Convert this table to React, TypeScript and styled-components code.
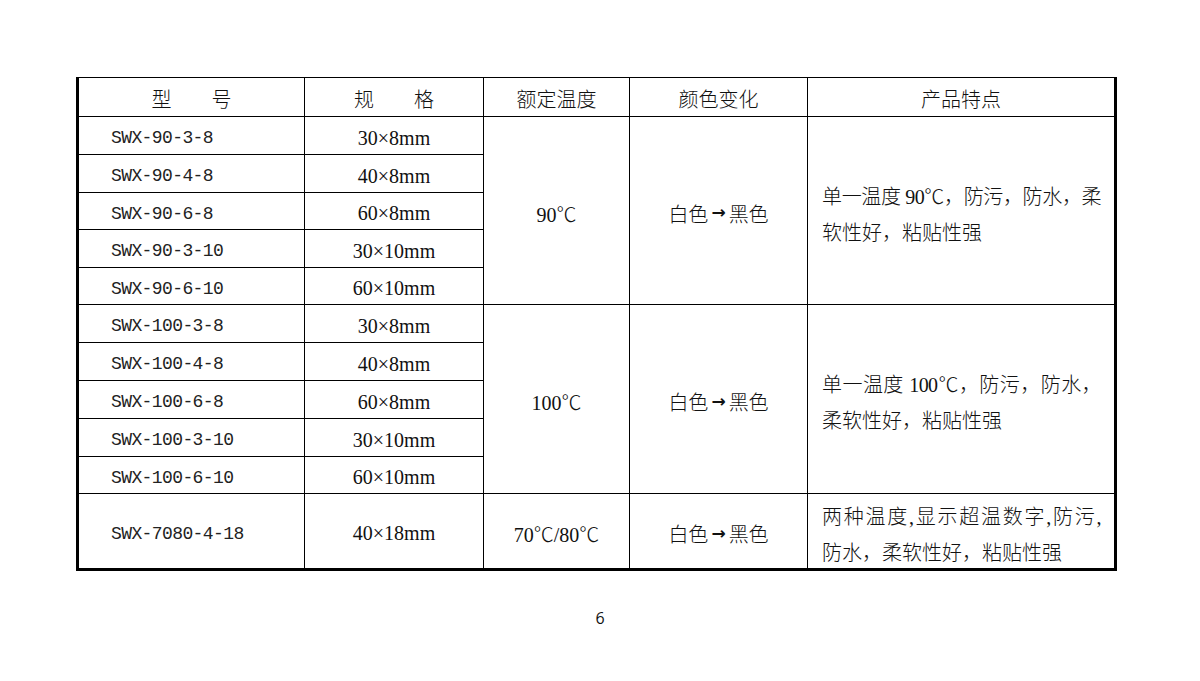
import React from "react";
import styled, { createGlobalStyle } from "styled-components";

const GlobalStyle = createGlobalStyle`
    html, body {
        margin: 0;
        padding: 0;
        background: #fff;
    }
    body {
        width: 1200px;
        height: 681px;
        overflow: hidden;
        color: #111;
        font-family: "Liberation Serif", "Noto Sans CJK SC", serif;
    }
`;

const Page = styled.div`
    display: flex;
    flex-direction: column;
    padding-top: 77px;
`;

const Sheet = styled.div`
    display: grid;
    grid-template-columns: 225px 178px 145px 177px 306px;
    grid-template-rows: 38px 37px 37px 36px 37px 36px 37px 37px 37px 37px 36px 74px;
    gap: 1px;
    background: #000;
    border: 3px solid #000;
    border-top-width: 1px;
    margin-left: 76px;
    width: max-content;
`;

const Cell = styled.div<{ $span?: number; $left?: boolean }>`
    grid-row: span ${(p) => p.$span || 1};
    background: #fff;
    display: flex;
    align-items: center;
    justify-content: ${(p) => (p.$left ? "flex-start" : "center")};
    padding: 5px 0 0 ${(p) => (p.$left ? "32px" : "0")};
    font-size: 20px;
    font-weight: 300;
    white-space: nowrap;
`;

const Head = styled(Cell)`
    padding-top: 2px;
    white-space: pre;
`;

const Code = styled.span`
    font-family: "Liberation Mono", monospace;
    font-size: 18px;
    letter-spacing: -0.6px;
    color: #222;
`;

const Arrow = styled.span`
    font-family: "DejaVu Sans", sans-serif;
    font-weight: bold;
    font-size: 17px;
    margin: 0 3px;
    position: relative;
    top: -1px;
`;

const Feature = styled.div`
    grid-row: span ${(p: { $span: number }) => p.$span};
    background: #fff;
    display: flex;
    flex-direction: column;
    justify-content: center;
    padding: 8px 13px 0 14px;
    font-size: 20px;
    font-weight: 300;
    line-height: 36px;
`;

const Line = styled.div<{ $full?: boolean }>`
    white-space: nowrap;
    text-align: left;
    text-align-last: ${(p) => (p.$full ? "justify" : "left")};
    letter-spacing: ${(p) => (p.$full ? "-0.6px" : "0")};
`;

const Footer = styled.div`
    margin-top: 36px;
    text-align: center;
    font-family: "Open Sans", "Liberation Sans", sans-serif;
    font-size: 16px;
    color: #111;
`;

type Group = {
    temp: string;
    rows: string[][];
    lines: { text: string; full?: boolean }[];
};

const groups: Group[] = [
    {
        temp: "90℃",
        rows: [
            ["SWX-90-3-8", "30×8mm"],
            ["SWX-90-4-8", "40×8mm"],
            ["SWX-90-6-8", "60×8mm"],
            ["SWX-90-3-10", "30×10mm"],
            ["SWX-90-6-10", "60×10mm"],
        ],
        lines: [{ text: "单一温度 90℃，防污，防水，柔", full: true }, { text: "软性好，粘贴性强" }],
    },
    {
        temp: "100℃",
        rows: [
            ["SWX-100-3-8", "30×8mm"],
            ["SWX-100-4-8", "40×8mm"],
            ["SWX-100-6-8", "60×8mm"],
            ["SWX-100-3-10", "30×10mm"],
            ["SWX-100-6-10", "60×10mm"],
        ],
        lines: [{ text: "单一温度 100℃，防污，防水，", full: true }, { text: "柔软性好，粘贴性强" }],
    },
    {
        temp: "70℃/80℃",
        rows: [["SWX-7080-4-18", "40×18mm"]],
        lines: [{ text: "两种温度,显示超温数字,防污,", full: true }, { text: "防水，柔软性好，粘贴性强" }],
    },
];

export default function App() {
    return (
        <>
            <GlobalStyle />
            <Page>
                <Sheet>
                    <Head>{"型　　号"}</Head>
                    <Head>{"规　　格"}</Head>
                    <Head>额定温度</Head>
                    <Head>颜色变化</Head>
                    <Head>产品特点</Head>
                    {groups.map((g) =>
                        g.rows.map((r, i) => (
                            <React.Fragment key={r[0]}>
                                <Cell $left>
                                    <Code>{r[0]}</Code>
                                </Cell>
                                <Cell>{r[1]}</Cell>
                                {i === 0 && (
                                    <>
                                        <Cell $span={g.rows.length}>{g.temp}</Cell>
                                        <Cell $span={g.rows.length}>
                                            白色<Arrow>→</Arrow>黑色
                                        </Cell>
                                        <Feature $span={g.rows.length}>
                                            {g.lines.map((l) => (
                                                <Line key={l.text} $full={l.full}>
                                                    {l.text}
                                                </Line>
                                            ))}
                                        </Feature>
                                    </>
                                )}
                            </React.Fragment>
                        ))
                    )}
                </Sheet>
                <Footer>6</Footer>
            </Page>
        </>
    );
}
